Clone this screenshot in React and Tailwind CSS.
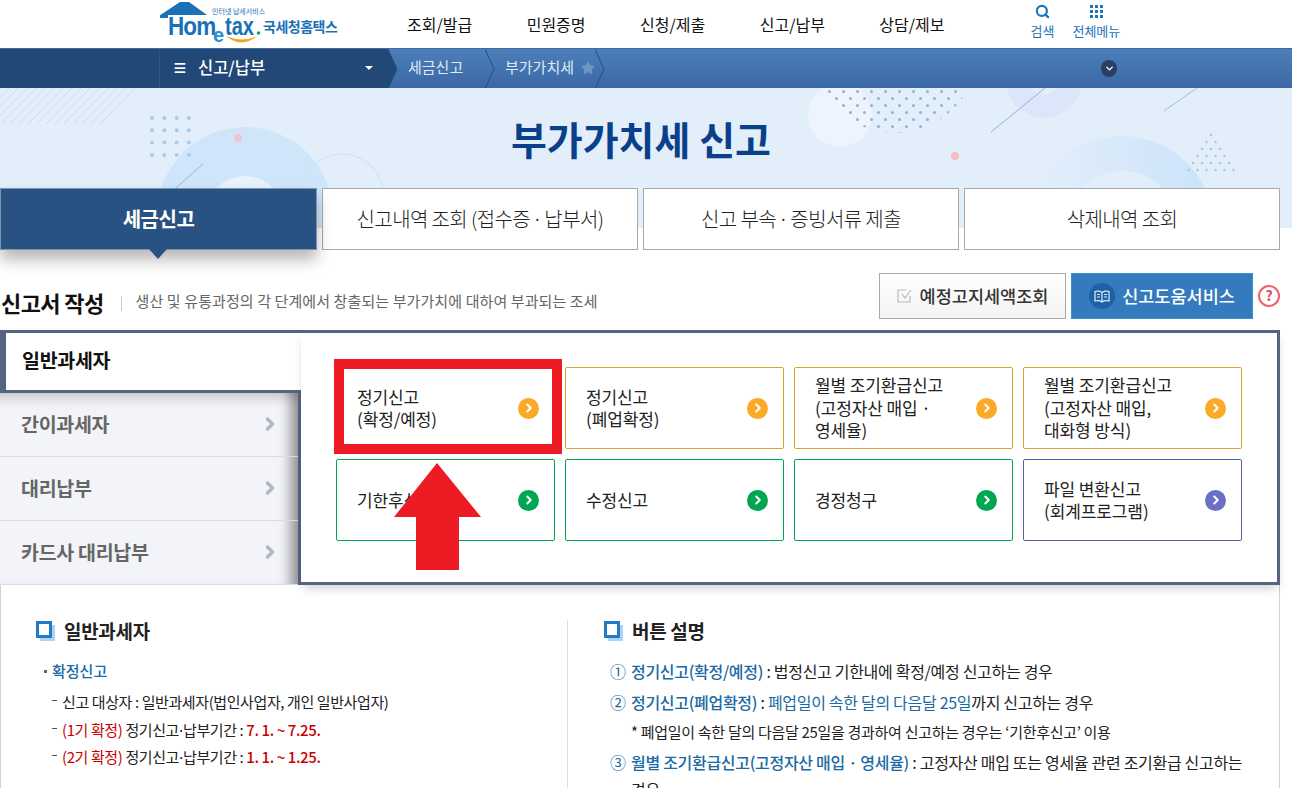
import { useMemo } from "react";
import { ChevronRight, Menu, Search, Star, ChevronDown } from "lucide-react";

const navItems = ["조회/발급", "민원증명", "신청/제출", "신고/납부", "상담/제보"];
const tabs = ["세금신고", "신고내역 조회 (접수증 · 납부서)", "신고 부속 · 증빙서류 제출", "삭제내역 조회"];
const sideItems = ["간이과세자", "대리납부", "카드사 대리납부"];

const tones = {
  orange: { border: "border-[#d9a42c]", dot: "bg-[#fbaa27]" },
  green: { border: "border-[#00a651]", dot: "bg-[#00a651]" },
  purple: { border: "border-[#5c5ca6]", dot: "bg-[#6a70c8]" },
};

const actions = [
  { lines: ["정기신고", "(확정/예정)"], tone: "orange" },
  { lines: ["정기신고", "(폐업확정)"], tone: "orange" },
  { lines: ["월별 조기환급신고", "(고정자산 매입 ·", "영세율)"], tone: "orange" },
  { lines: ["월별 조기환급신고", "(고정자산 매입,", "대화형 방식)"], tone: "orange" },
  { lines: ["기한후신고"], tone: "green" },
  { lines: ["수정신고"], tone: "green" },
  { lines: ["경정청구"], tone: "green" },
  { lines: ["파일 변환신고", "(회계프로그램)"], tone: "purple" },
];

const Logo = () => (
  <div className="relative w-[190px] h-[48px] shrink-0">
    <svg className="absolute left-0 top-0" width="190" height="48" viewBox="0 0 190 48">
      <path d="M-1 16 L20 2 L29 2 L47 15 L8 15 L8 18 L0 18 Z" fill="#1a71b8" />
      <path d="M66 36 Q82 49 97 36 Q82 43 66 36 Z" fill="#f5a11c" />
      <circle cx="98.500" cy="33" r="1.800" fill="#13a24a" />
    </svg>
    <span className="absolute left-[52px] top-[7px] text-[7px] leading-[9px] text-[#1a71b8] whitespace-nowrap">
      인터넷 납세서비스
    </span>
    <span className="absolute left-[8px] top-[11px] origin-left scale-x-[0.9] text-[25px] leading-[30px] font-bold tracking-[-1px] text-[#1a71b8] font-['Liberation_Sans',sans-serif] whitespace-nowrap">
      Hom
    </span>
    <span className="absolute left-[53px] top-[25px] text-[20px] leading-[20px] font-bold text-[#2b8fd0] font-['Liberation_Sans',sans-serif]">
      e
    </span>
    <span className="absolute left-[65px] top-[11px] origin-left scale-x-[0.8] text-[25px] leading-[30px] font-bold text-[#1a71b8] font-['Liberation_Sans',sans-serif]">
      tax
    </span>
    <span className="absolute left-[103px] top-[16px] text-[14px] leading-[20px] font-bold tracking-[-0.500px] text-[#1a71b8] whitespace-nowrap">
      국세청홈택스
    </span>
  </div>
);

const Header = () => (
  <header className="h-[48px] flex items-center pl-[160px] bg-white">
    <Logo />
    <nav className="flex gap-[54.500px] ml-[57px] -mt-[1px]">
      {navItems.map((item) => (
        <a key={item} className="text-[16px] leading-[24px] text-[#111] whitespace-nowrap">
          {item}
        </a>
      ))}
    </nav>
    <div className="flex ml-[86px] -mt-[9px] gap-[18px] text-[#1a75bb] text-[13px] leading-[16px]">
      <div className="flex flex-col items-center">
        <Search size={15} strokeWidth={3.500} className="mt-[3px] mb-[4px]" />
        <span>검색</span>
      </div>
      <div className="flex flex-col items-center">
        <div className="grid grid-cols-3 gap-[2px] w-[13px] mt-[4px] mb-[5px]">
          {Array.from({ length: 9 }, (_, i) => (
            <span key={i} className="w-[3px] h-[3px] bg-[#1a75bb]" />
          ))}
        </div>
        <span>전체메뉴</span>
      </div>
    </div>
  </header>
);

const CrumbTip = ({ fill = "none" }) => (
  <svg className="absolute top-0 -right-[10px]" width="10" height="40" viewBox="0 0 10 40">
    <path d="M0 0 L9 20 L0 40" fill={fill} stroke="#23507f" strokeWidth="1" />
  </svg>
);

const Breadcrumb = () => (
  <div className="h-[40px] flex bg-gradient-to-b from-[#4d7fba] to-[#3a68a4] border-t border-[#3f6ca6] text-white">
    <div className="w-[160px] bg-[#214876] border-r border-[#2c5687]" />
    <div className="relative w-[228px] pb-[2px] bg-[#214876] flex items-center">
      <Menu size={14} strokeWidth={3} className="ml-[13px]" />
      <span className="ml-[11px] text-[16.500px] font-medium">신고/납부</span>
      <span className="ml-[100px] w-0 h-0 border-x-[4px] border-x-transparent border-t-[4px] border-t-white" />
      <CrumbTip fill="#214876" />
    </div>
    <div className="relative w-[97px] pl-[20px] pb-[2px] flex items-center text-[15px] text-[#dfe9f5]">
      세금신고
      <CrumbTip />
    </div>
    <div className="relative w-[110px] pl-[20px] pb-[2px] flex items-center text-[15px] text-[#dfe9f5] whitespace-nowrap">
      부가가치세
      <Star size={14} fill="#6f95c4" stroke="#6f95c4" className="ml-[7px]" />
      <CrumbTip />
    </div>
    <span className="ml-[506px] mt-[11px] w-[16px] h-[17px] rounded-full bg-[#2a3f63] flex items-center justify-center">
      <ChevronDown size={11} strokeWidth={3} />
    </span>
  </div>
);

const HeroArt = () => {
  const grid = useMemo(() => {
    const dots = [];
    for (let x = 152; x <= 190; x += 12.300) for (let y = 30; y <= 68; y += 12.300) dots.push([x, y]);
    return dots;
  }, []);
  const triangle = useMemo(() => {
    const dots = [];
    for (let r = 0; r < 6; r++) {
      for (let i = 0; i <= r; i++) dots.push([1211 - r * 4.500 + i * 9, 47 + r * 7]);
    }
    return dots;
  }, []);
  const stripes = Array.from({ length: 16 }, (_, i) => i * 9);

  return (
    <svg className="absolute inset-0" width="1292" height="140" viewBox="0 0 1292 140">
      <defs>
        <linearGradient id="ringFade" x1="0" x2="1" y1="0" y2="0">
          <stop offset="0" stopColor="#e3eefb" />
          <stop offset="1" stopColor="#cbe3f9" />
        </linearGradient>
        <pattern id="halftone" patternUnits="userSpaceOnUse" width="14" height="14">
          <circle cx="3.500" cy="3.500" r="1.500" fill="#8fb0da" />
          <circle cx="10.500" cy="10.500" r="1.500" fill="#8fb0da" />
        </pattern>
      </defs>
      {stripes.map((s) => (
        <line key={s} x1={s - 35} y1={36} x2={s} y2={0} stroke="#c9dcf0" strokeWidth="1" />
      ))}
      <circle cx="245" cy="127" r="88" fill="#cfe5f9" />
      <circle cx="245" cy="127" r="39" fill="#e8f2fc" />
      <circle cx="342" cy="108" r="42" fill="none" stroke="#cfe0f5" />
      <line x1="176" y1="100" x2="203" y2="76" stroke="#98b8de" />
      <circle cx="238" cy="50" r="4" fill="#f0c4d0" />
      {grid.map(([x, y]) => (
        <circle key={`${x}-${y}`} cx={x} cy={y} r="2" fill="#a9cbe6" />
      ))}
      <circle cx="840" cy="27" r="32" fill="#edf4fd" />
      <circle cx="895" cy="-37" r="82" fill="url(#halftone)" />
      <circle cx="1044" cy="-8" r="38" fill="#dce5f9" />
      <circle cx="1044" cy="-8" r="15" fill="#e3eefb" />
      <line x1="991" y1="44" x2="1045" y2="0" stroke="#8fb0dd" />
      <line x1="1164" y1="23" x2="1197" y2="0" stroke="#9dbbe2" />
      <circle cx="955" cy="68" r="4" fill="#f8bcc4" />
      <circle cx="1122" cy="140" r="92" fill="url(#ringFade)" />
      <circle cx="1122" cy="140" r="57" fill="#e3eefb" />
      {triangle.map(([x, y]) => (
        <circle key={`${x}-${y}`} cx={x} cy={y} r="1.200" fill="#a9c3e4" />
      ))}
    </svg>
  );
};

const Hero = () => (
  <section className="relative h-[140px] bg-[#e3eefb] overflow-hidden">
    <HeroArt />
    <h1 className="relative pt-[22px] pr-[10px] text-center text-[39px] leading-[56px] font-bold text-[#0a3f8a]">
      부가가치세 신고
    </h1>
  </section>
);

// 가운데 점 양옆 공백이 원본에서 좁다
const TabLabel = ({ text }) => {
  const [head, tail] = text.split(" · ");
  if (!tail) return text;
  return (
    <>
      {head}
      <span className="mx-[2px]">·</span>
      {tail}
    </>
  );
};

const Tabs = () => (
  <div className="relative -mt-[40px] w-[1280px] grid grid-cols-[317px_316px_316px_316px] gap-[5px]">
    {tabs.map((tab, i) =>
      i === 0 ? (
        <div
          key={tab}
          className="relative h-[62px] bg-[#285282] border border-[#7f93ad] shadow-[0_10px_14px_rgba(0,0,0,0.28)] flex items-center justify-center text-[20px] font-bold text-white tracking-[-0.500px]"
        >
          {tab}
          <span className="absolute left-[148px] top-[60px] w-0 h-0 border-x-[9px] border-x-transparent border-t-[10px] border-t-[#285282]" />
        </div>
      ) : (
        <div
          key={tab}
          className="h-[62px] bg-white border border-[#a9a9a9] flex items-center justify-center text-[20px] font-light text-[#222] tracking-[-0.600px] whitespace-nowrap"
        >
          <TabLabel text={tab} />
        </div>
      )
    )}
  </div>
);

const SectionHead = () => (
  <div className="w-[1280px] h-[80px] flex items-start">
    <h2 className="mt-[37px] ml-[1px] text-[22px] leading-[30px] font-bold text-[#111] tracking-[-0.600px] whitespace-nowrap">
      신고서 작성
    </h2>
    <span className="mt-[46px] ml-[17px] w-px h-[15px] bg-[#ccc]" />
    <p className="mt-[41px] ml-[14px] text-[15px] leading-[20px] text-[#666] tracking-[0.100px] whitespace-nowrap">
      생산 및 유통과정의 각 단계에서 창출되는 부가가치에 대하여 부과되는 조세
    </p>
    <div className="ml-auto mt-[23px] flex items-center">
      <button className="w-[187px] h-[46px] bg-gradient-to-b from-white to-[#f3f3f3] border border-[#a9a9a9] flex items-center justify-center text-[17.500px] font-medium text-[#333] whitespace-nowrap">
        <svg className="mr-[7px]" width="16" height="16" viewBox="0 0 16 16" fill="none">
          <path d="M13 8 V14 H1 V2 H9" stroke="#b9b9b9" strokeWidth="1.200" />
          <path d="M5 6 L8 10 L14 2" stroke="#b9b9b9" strokeWidth="1.200" />
        </svg>
        예정고지세액조회
      </button>
      <button className="ml-[5px] w-[182px] h-[46px] bg-[#347bbd] border border-[#3d8dd0] flex items-center justify-center text-[17.500px] font-medium text-white whitespace-nowrap">
        <span className="mr-[7px] w-[26px] h-[26px] rounded-full bg-[#1e62a3] flex items-center justify-center">
          <svg width="16" height="13" viewBox="0 0 16 13" fill="none" stroke="#dcecf9" strokeWidth="1.200">
            <path d="M8 2.500 C6 1 3 1 1 1.500 V11 C3 10.500 6 10.500 8 12 C10 10.500 13 10.500 15 11 V1.500 C13 1 10 1 8 2.500 V12" />
            <path d="M3 4.500 H6 M3 7 H6 M10 4.500 H13 M10 7 H13" />
          </svg>
        </span>
        신고도움서비스
      </button>
      <span className="ml-[5px] mt-[-1px] w-[22px] h-[22px] rounded-full border-2 border-[#e8626a] flex items-center justify-center text-[14px] font-bold text-[#e0474f]">
        ?
      </span>
    </div>
  </div>
);

const ActionCard = ({ lines, tone }) => (
  <div className={`h-[82px] bg-white border rounded-[2px] pl-[20px] pr-[6px] flex items-center justify-between ${tones[tone].border}`}>
    <p className="text-[17px] leading-[22.500px] text-[#222] tracking-[-0.100px] whitespace-nowrap">
      {lines.map((line) => (
        <span key={line} className="block">
          {line}
        </span>
      ))}
    </p>
    <span className={`shrink-0 mr-[9px] w-[21px] h-[21px] rounded-full flex items-center justify-center text-white ${tones[tone].dot}`}>
      <ChevronRight size={14} strokeWidth={3.500} />
    </span>
  </div>
);

const FilingPanel = () => (
  <div className="relative w-[1280px] h-[255px] flex">
    <div className="w-[301px] flex flex-col">
      <div className="h-[63px] bg-white border-t-[3px] border-l-[6px] border-[#566482] pl-[16px] pt-[14px] text-[19.500px] leading-[26px] font-bold text-[#111] tracking-[-0.300px]">
        일반과세자
      </div>
      <div className="flex-1 border-t-[3px] border-r-[3px] border-[#566482] bg-[#f2f4fa] flex flex-col shadow-[inset_-16px_0_12px_-8px_rgba(0,0,0,0.38),inset_0_16px_14px_-12px_rgba(0,0,0,0.2)]">
        {sideItems.map((item) => (
          <div key={item} className="h-[64px] pb-[2px] border-b border-[#dcdde3] flex items-center justify-between pl-[21px] pr-[18px] text-[19.500px] font-bold text-[#666] tracking-[-0.300px]">
            {item}
            <ChevronRight size={20} strokeWidth={4} className="text-[#b0b5c2]" />
          </div>
        ))}
      </div>
    </div>
    <div className="flex-1 border-t-[3px] border-r-[3px] border-b-[3px] border-[#566482] bg-white pl-[35px] pt-[34px] shadow-[0_6px_10px_-3px_rgba(0,0,0,0.2)]">
      <div className="grid grid-cols-[219px_219px_219px_219px] gap-[10px]">
        {actions.map((action) => (
          <ActionCard key={action.lines.join()} {...action} />
        ))}
      </div>
    </div>
    {/* 빨간 표시 */}
    <div className="absolute left-[334px] top-[29px] w-[228px] h-[95px] border-[10px] border-[#ed1c24]" />
    <svg className="absolute left-[394px] top-[133px]" width="87" height="107" viewBox="0 0 87 107">
      <path d="M43 0 L87 54 L65 54 L65 107 L22 107 L22 54 L0 54 Z" fill="#ed1c24" />
    </svg>
  </div>
);

const BoxIcon = () => (
  <span className="relative shrink-0 w-[19px] h-[20px]">
    <span className="absolute left-[4px] top-[4px] w-[15px] h-[16px] bg-[#acd3f3]" />
    <span className="absolute left-0 top-0 w-[16px] h-[17px] border-[3px] border-[#1f7bc7] bg-white" />
  </span>
);

const GuideTitle = ({ children }) => (
  <h3 className="flex items-center gap-[9px] text-[19px] leading-[26px] font-bold text-[#222] tracking-[-0.300px]">
    <BoxIcon />
    {children}
  </h3>
);

const Red = ({ children, strong }) => (
  <span className={strong ? "font-medium text-[#c80000]" : "text-[#c80000]"}>{children}</span>
);

const DashLine = ({ children }) => (
  <li className="relative pl-[10px] text-[15px] leading-[20px] text-[#222] tracking-[-0.400px] whitespace-nowrap before:absolute before:left-0 before:top-[8px] before:w-[5px] before:h-px before:bg-[#555]">
    {children}
  </li>
);

const Period = () => (
  <>
    정기신고<span className="-mx-[2px]">·</span>납부기간 :{" "}
  </>
);

const NumLine = ({ n, title, children }) => (
  <p className="relative pl-[27px] text-[16px] leading-[27px] text-[#222] tracking-[-0.300px]">
    <span className="absolute left-[6px] top-0 text-[#1a6aa5]">{n}</span>
    <b className="font-medium text-[#1a6aa5]">{title}</b> : {children}
  </p>
);

const Guide = () => (
  <div className="w-[1280px] h-[203px] border-x border-[#d0d0d0] bg-white flex overflow-hidden">
    <div className="w-[566px] shrink-0 pl-[35px] pt-[33px]">
      <GuideTitle>일반과세자</GuideTitle>
      <p className="relative mt-[17px] pl-[16px] text-[15px] leading-[20px] font-medium text-[#1a6aa5] before:absolute before:left-[8px] before:top-[9px] before:w-[3px] before:h-[3px] before:bg-[#666]">
        확정신고
      </p>
      <ul className="mt-[11px] ml-[16px] flex flex-col gap-[7.500px]">
        <DashLine>신고 대상자 : 일반과세자(법인사업자, 개인 일반사업자)</DashLine>
        <DashLine>
          <Red>(1기 확정)</Red> <Period /><Red strong>7. 1. ~ 7.25.</Red>
        </DashLine>
        <DashLine>
          <Red>(2기 확정)</Red> <Period /><Red strong>1. 1. ~ 1.25.</Red>
        </DashLine>
      </ul>
    </div>
    <div className="mt-[35px] w-px shrink-0 bg-[#ddd]" />
    <div className="flex-1 pl-[36px] pr-[30px] pt-[33px]">
      <GuideTitle>버튼 설명</GuideTitle>
      <div className="mt-[14px] flex flex-col gap-[4px]">
        <NumLine n="①" title="정기신고(확정/예정)">법정신고 기한내에 확정/예정 신고하는 경우</NumLine>
        <NumLine n="②" title="정기신고(폐업확정)">
          <span className="text-[#1a6aa5]">폐업일이 속한 달의 다음달 25일</span>까지 신고하는 경우
        </NumLine>
        <p className="pl-[27px] -mt-[2px] text-[15px] leading-[27px] text-[#222] tracking-[-0.300px]">
          * 폐업일이 속한 달의 다음달 25일을 경과하여 신고하는 경우는 ‘기한후신고’ 이용
        </p>
        <NumLine n="③" title="월별 조기환급신고(고정자산 매입 · 영세율)">
          고정자산 매입 또는 영세율 관련 조기환급 신고하는 경우
        </NumLine>
      </div>
    </div>
  </div>
);

export default function App() {
  return (
    <div className="h-[788px] overflow-hidden bg-white font-['Noto_Sans_CJK_KR','Noto_Sans',sans-serif]">
      <Header />
      <Breadcrumb />
      <Hero />
      <Tabs />
      <SectionHead />
      <FilingPanel />
      <Guide />
    </div>
  );
}
